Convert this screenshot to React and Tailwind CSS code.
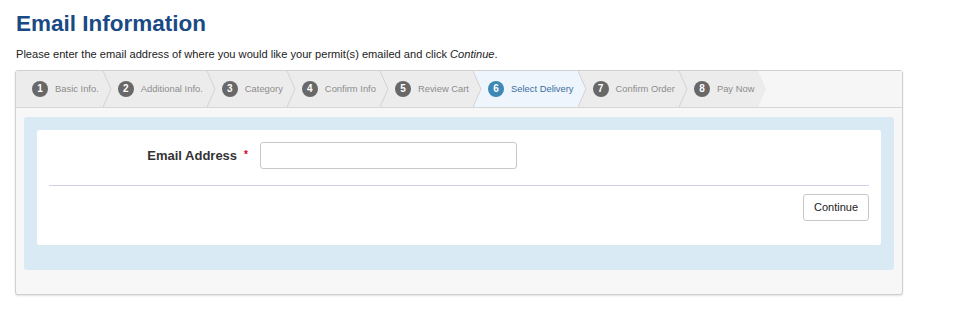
const steps = [
  "Basic Info.",
  "Additional Info.",
  "Category",
  "Confirm Info",
  "Review Cart",
  "Select Delivery",
  "Confirm Order",
  "Pay Now",
];

const ACTIVE = 5;
const STEP_BG = "#ececec";
const ACTIVE_BG = "#eef5fc";
const BAR_BG = "#f6f6f6";

function Chevron({ from, to, line }) {
  return (
    <svg width="10" height="36" viewBox="0 0 10 36" className="block shrink-0">
      <rect width="10" height="36" fill={to} />
      <polygon points="0,0 8,18 0,36" fill={from} />
      {line && (
        <polyline points="0,0 8,18 0,36" fill="none" stroke="#d2d2d2" strokeWidth="1" />
      )}
    </svg>
  );
}

function Step({ n, label, active, first }) {
  return (
    <div
      className={
        "flex items-center gap-[7px] pr-1 " +
        (first ? "pl-4 " : "pl-[5px] ") +
        (active ? "bg-[#eef5fc]" : "bg-[#ececec]")
      }
    >
      <span
        className={
          "flex h-4 w-4 items-center justify-center rounded-full text-[10px] font-bold leading-none text-white " +
          (active ? "bg-[#3d88b4]" : "bg-[#686868]")
        }
      >
        {n}
      </span>
      <span
        className={
          "whitespace-nowrap text-[9.4px] leading-none " +
          (active ? "text-[#3c6fa3]" : "text-[#8c8c8c]")
        }
      >
        {label}
      </span>
    </div>
  );
}

export default function App() {
  return (
    <div className="min-h-screen bg-white pl-4 pt-[10px] font-['Liberation_Sans',Arial,sans-serif]">
      <h1 className="text-[22.5px] font-bold leading-[28px] text-[#1a4a84]">
        Email Information
      </h1>
      <p className="mt-[9px] text-[11.1px] leading-[14px] text-[#222]">
        Please enter the email address of where you would like your permit(s) emailed and click{" "}
        <em>Continue</em>.
      </p>

      <div className="-ml-px mt-[9px] w-[888px] rounded-[3px] border border-[#d0d0d0] bg-[#f7f7f7] shadow-[0_1px_2px_rgba(0,0,0,0.12)]">
        {/* wizard steps */}
        <div className="flex h-[37px] border-b border-[#d6d6d6] bg-[#f6f6f6]">
          {steps.map((label, i) => {
            const bg = i === ACTIVE ? ACTIVE_BG : STEP_BG;
            const next =
              i === steps.length - 1 ? BAR_BG : i + 1 === ACTIVE ? ACTIVE_BG : STEP_BG;
            return (
              <div key={label} className="flex">
                <Step n={i + 1} label={label} active={i === ACTIVE} first={i === 0} />
                <Chevron from={bg} to={next} line={i !== steps.length - 1} />
              </div>
            );
          })}
        </div>

        <div className="px-2 pb-6 pt-[9px]">
          <div className="rounded-[3px] bg-[#daeaf4] px-[13px] pb-[25px] pt-[13px]">
            <div className="rounded-[3px] bg-white px-3 pb-6 pt-3">
              <div className="flex items-center">
                <label className="flex w-[199px] items-start justify-end text-[13px] font-bold text-[#333]">
                  Email Address
                  <span className="ml-[7px] mt-[1px] text-[10px] text-[#d9001b]">*</span>
                </label>
                <input
                  type="email"
                  className="ml-3 h-[27px] w-[257px] rounded-[3px] border border-[#c8c8c8] bg-white px-2 text-[12px] outline-none"
                />
              </div>
              <hr className="mt-4 border-t border-[#d3cfe6]" />
              <div className="mt-2 flex justify-end">
                <button className="h-[27px] w-[66px] rounded-[3px] border border-[#c8c8c8] bg-white text-[11px] text-[#222]">
                  Continue
                </button>
              </div>
            </div>
          </div>
        </div>
      </div>
    </div>
  );
}
